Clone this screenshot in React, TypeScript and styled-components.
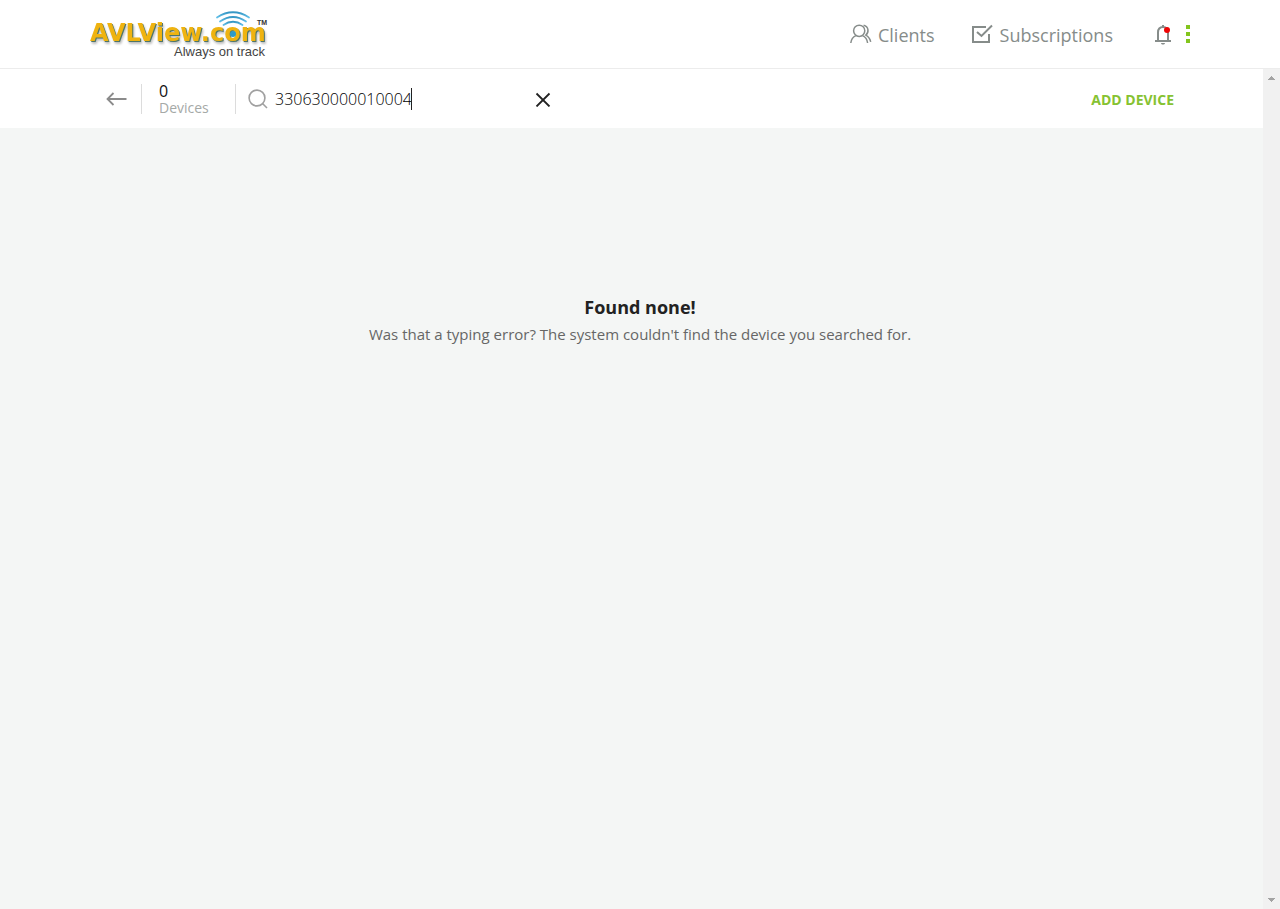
import React, { useState } from "react";
import styled, { createGlobalStyle } from "styled-components";

const GlobalStyle = createGlobalStyle`
  *, *::before, *::after { box-sizing: border-box; }
  body {
    margin: 0;
    background: #f4f6f5;
    color: #222;
    font-family: "Open Sans", "Noto Sans", sans-serif;
  }
  h1, p { margin: 0; }
  button, input { font: inherit; }
`;

const Page = styled.div`
  min-height: 100vh;
  display: flex;
  flex-direction: column;
`;

const Container = styled.div`
  width: 100%;
  max-width: 1100px;
  margin: 0 auto;
  display: flex;
  align-items: center;
`;

const Header = styled.header`
  display: flex;
  height: 69px;
  background: #fff;
  border-bottom: 1px solid #ececec;
`;

const LogoLink = styled.a`
  display: block;
  align-self: flex-start;
  height: 60px;
  margin-right: auto;
`;

const Nav = styled.nav`
  display: flex;
  align-items: center;
  gap: 37px;
`;

const NavLink = styled.a`
  display: flex;
  align-items: center;
  gap: 6px;
  color: #868c8a;
  font-size: 18px;
  line-height: 24px;
  text-decoration: none;
`;

const NavLabel = styled.span`
  padding-top: 2px;
`;

const Tools = styled.div`
  display: flex;
  align-items: center;
  gap: 14px;
  margin-left: 41px;
`;

const IconButton = styled.button`
  display: flex;
  padding: 0;
  border: 0;
  background: none;
  color: inherit;
  cursor: pointer;
`;

const Workspace = styled.div`
  position: relative;
  flex: 1;
  display: flex;
  flex-direction: column;
`;

const Toolbar = styled.section`
  display: flex;
  height: 59px;
  padding: 0 16px;
  background: #fff;
`;

const ToolbarRow = styled(Container)`
  padding: 0 16px;
`;

const BackButton = styled(IconButton)`
  margin-right: 14px;
`;

const Divider = styled.span`
  width: 1px;
  height: 30px;
  background: #dcdcdc;
`;

const DeviceCount = styled.div`
  display: flex;
  flex-direction: column;
  gap: 1px;
  width: 93px;
  padding: 1px 0 0 17px;
  font-size: 14px;
  line-height: 16px;
  color: #a5a9a7;
`;

const CountValue = styled.strong`
  font-size: 16px;
  font-weight: 400;
  color: #111;
`;

const SearchForm = styled.form`
  display: flex;
  align-items: center;
  width: 315px;
  padding-left: 12px;
`;

const SearchInput = styled.input`
  field-sizing: content;
  min-width: 1px;
  max-width: 240px;
  height: 24px;
  margin-left: 7px;
  padding: 0;
  border: 0;
  outline: 0;
  background: none;
  color: #000;
  font-size: 16px;
  font-weight: 300;
`;

const Caret = styled.span`
  width: 1px;
  height: 22px;
  margin-left: -1px;
  background: #222;
`;

const ClearButton = styled(IconButton)`
  margin-left: auto;
`;

const AddButton = styled.button`
  margin-left: auto;
  padding: 2px 0 0;
  border: 0;
  background: none;
  color: #86c232;
  font-size: 14px;
  font-weight: 700;
  line-height: 20px;
  cursor: pointer;
`;

const Empty = styled.main`
  padding: 166px 20px 20px;
  text-align: center;
`;

const EmptyTitle = styled.h1`
  font-size: 18px;
  font-weight: 700;
  line-height: 26px;
  color: #222;
`;

const EmptyText = styled.p`
  font-size: 15px;
  line-height: 28px;
  color: #666;
`;

const ScrollTrack = styled.div`
  position: absolute;
  top: 0;
  right: 0;
  bottom: 0;
  width: 17px;
  padding: 7px 5px;
  display: flex;
  flex-direction: column;
  justify-content: space-between;
  background: #f1f1f1;
`;

const Wordmark = styled.text`
  fill: #efb310;
  font: 700 24px "DejaVu Sans", sans-serif;
  filter: drop-shadow(1px 1px 0 #4e7568) drop-shadow(1px 2px 1px rgba(0, 0, 0, 0.25));
`;

const Tagline = styled.text`
  fill: #444;
  font: 13px "Liberation Sans", Arial, sans-serif;
`;

const Trademark = styled.text`
  fill: #333;
  font: 700 7px "Liberation Sans", Arial, sans-serif;
`;

function Logo() {
  return (
    <svg width="180" height="60" viewBox="0 0 180 60" role="img" aria-label="AVLView.com, Always on track">
      <defs>
        <linearGradient id="waves" x1="0" y1="0" x2="0" y2="1">
          <stop offset="0" stopColor="#3496c4" />
          <stop offset="1" stopColor="#62bfe8" />
        </linearGradient>
      </defs>
      <g fill="none" stroke="url(#waves)" strokeWidth="1.8" strokeLinecap="round">
        <path d="M127 17.500Q143 7 159 17.500" />
        <path d="M130 21.500Q143 12.500 156 21.500" />
        <path d="M133.500 25Q143 18.500 152.500 25" />
      </g>
      <Wordmark x="0" y="41">AVLView.com</Wordmark>
      <circle cx="143" cy="34" r="3" fill="#2d9bc9" />
      <Trademark x="167" y="25">TM</Trademark>
      <Tagline x="84" y="56">Always on track</Tagline>
    </svg>
  );
}

const ClientsIcon = () => (
  <svg width="22" height="20" viewBox="0 0 22 20" fill="none" stroke="#868c8a" strokeWidth="1.5" aria-hidden="true">
    <circle cx="9.2" cy="6.8" r="5.6" />
    <path d="M.8 19C1.2 15.4 3.1 12.8 6 11.6M12.4 11.6c2.9 1.2 4.8 3.8 5.2 7.4" />
    <path d="M13.6 1.3c5.2 1.2 5.6 7 2.2 9.8 2.7 1.4 4.2 3.5 4.9 6.7" />
  </svg>
);

const SubscriptionsIcon = () => (
  <svg width="22" height="20" viewBox="0 0 22 20" fill="none" stroke="#868c8a" strokeWidth="2" aria-hidden="true">
    <path d="M14 3H1v15h16v-8" />
    <path d="M5 8l4.500 4L20 1.500" />
  </svg>
);

const BellIcon = () => (
  <svg width="18" height="22" viewBox="0 0 18 22" aria-hidden="true">
    <path d="M4 17V9.500C4 6 6 4 9 4S14 6 14 9.500V17" fill="none" stroke="#868c8a" strokeWidth="2" />
    <path d="M1 17h16v2H1zM8 2h2v2h-2zM7 20h4c-.2 2-3.800 2-4 0z" fill="#868c8a" />
    <circle cx="13" cy="7" r="3" fill="#ee0505" />
  </svg>
);

const MoreIcon = () => (
  <svg width="4" height="18" viewBox="0 0 4 18" fill="#83c51d" aria-hidden="true">
    <path d="M0 0h4v4H0zM0 7h4v4H0zM0 14h4v4H0z" />
  </svg>
);

const BackIcon = () => (
  <svg width="21" height="14" viewBox="0 0 21 14" fill="none" stroke="#8b8b8b" strokeWidth="1.800" aria-hidden="true">
    <path d="M20.500 7H1.500M7.500 1L1.500 7l6 6" />
  </svg>
);

const SearchIcon = () => (
  <svg width="20" height="20" viewBox="0 0 20 20" fill="none" stroke="#a0a0a0" strokeWidth="1.600" aria-hidden="true">
    <circle cx="9" cy="9" r="7.900" />
    <path d="M14.500 14.500l4.500 4.500" />
  </svg>
);

const ClearIcon = () => (
  <svg width="16" height="16" viewBox="0 0 16 16" fill="none" stroke="#222" strokeWidth="1.800" aria-hidden="true">
    <path d="M1.500 2.500l13 13M14.500 2.500l-13 13" />
  </svg>
);

const ScrollArrow = ({ down }: { down?: boolean }) => (
  <svg width="7" height="4" viewBox="0 0 7 4" fill="#a3a3a3" shapeRendering="crispEdges" aria-hidden="true">
    <path d={down ? "M0 0h7L3.500 4z" : "M0 4h7L3.500 0z"} />
  </svg>
);

export default function App() {
  const [query, setQuery] = useState("330630000010004");

  return (
    <Page>
      <GlobalStyle />
      <Header>
        <Container>
          <LogoLink href="#">
            <Logo />
          </LogoLink>
          <Nav>
            <NavLink href="#clients">
              <ClientsIcon />
              <NavLabel>Clients</NavLabel>
            </NavLink>
            <NavLink href="#subscriptions">
              <SubscriptionsIcon />
              <NavLabel>Subscriptions</NavLabel>
            </NavLink>
          </Nav>
          <Tools>
            <IconButton type="button" aria-label="Notifications">
              <BellIcon />
            </IconButton>
            <IconButton type="button" aria-label="More options">
              <MoreIcon />
            </IconButton>
          </Tools>
        </Container>
      </Header>
      <Workspace>
        <Toolbar>
          <ToolbarRow>
            <BackButton type="button" aria-label="Back">
              <BackIcon />
            </BackButton>
            <Divider />
            <DeviceCount>
              <CountValue>0</CountValue>
              Devices
            </DeviceCount>
            <Divider />
            <SearchForm role="search" onSubmit={(e) => e.preventDefault()}>
              <SearchIcon />
              <SearchInput
                type="text"
                aria-label="Search devices"
                value={query}
                onChange={(e) => setQuery(e.target.value)}
              />
              <Caret />
              <ClearButton type="button" aria-label="Clear search" onClick={() => setQuery("")}>
                <ClearIcon />
              </ClearButton>
            </SearchForm>
            <AddButton type="button">ADD DEVICE</AddButton>
          </ToolbarRow>
        </Toolbar>
        <Empty>
          <EmptyTitle>Found none!</EmptyTitle>
          <EmptyText>Was that a typing error? The system couldn't find the device you searched for.</EmptyText>
        </Empty>
        <ScrollTrack aria-hidden="true">
          <ScrollArrow />
          <ScrollArrow down />
        </ScrollTrack>
      </Workspace>
    </Page>
  );
}
